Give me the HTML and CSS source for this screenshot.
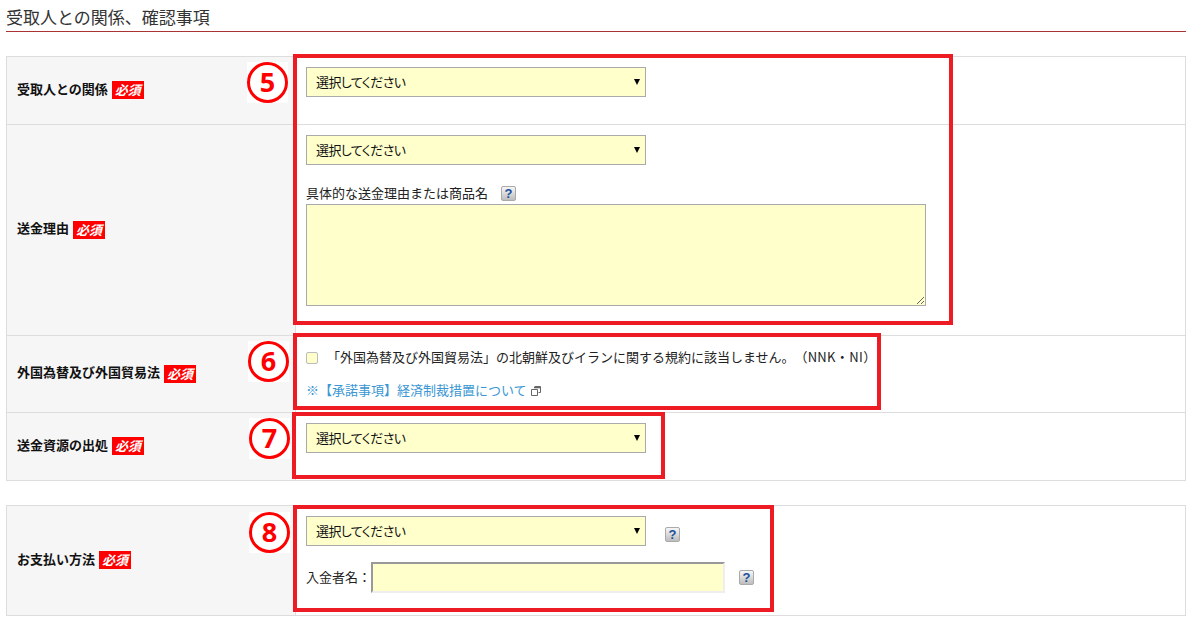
FILE: index.html
```html
<!DOCTYPE html>
<html lang="ja">
<head>
<meta charset="utf-8">
<title>受取人との関係、確認事項</title>
<link rel="stylesheet" href="styles.css">
</head>
<body>
<h2 class="heading">受取人との関係、確認事項</h2>
<table class="form first">
  <tr class="r1">
    <th><span class="lab">受取人との関係</span><span class="req">必須</span></th>
    <td><div class="sel"><select><option>選択してください</option></select></div></td>
  </tr>
  <tr class="r2">
    <th><span class="lab">送金理由</span><span class="req">必須</span></th>
    <td>
      <div class="sel"><select><option>選択してください</option></select></div>
      <div class="reason">具体的な送金理由または商品名<span class="help h-reason">?</span></div>
      <textarea class="area"></textarea>
    </td>
  </tr>
  <tr class="r3">
    <th><span class="lab">外国為替及び外国貿易法</span><span class="req">必須</span></th>
    <td>
      <label class="agree"><input type="checkbox" class="check"><span class="agree-text">「外国為替及び外国貿易法」の北朝鮮及びイランに関する規約に該当しません。（<span class="code">NNK・NI</span>）</span></label>
      <a class="link" href="#">※【承諾事項】経済制裁措置について<svg class="ext" width="10" height="10" viewBox="0 0 10 10"><path d="M3.500 .5h6v6h-2M.5 3.500h6v6h-6z" fill="none" stroke="#666" stroke-width="1"/><path d="M3 1h6.500v1.300H3z" fill="#666"/></svg></a>
    </td>
  </tr>
  <tr class="r4">
    <th><span class="lab">送金資源の出処</span><span class="req">必須</span></th>
    <td><div class="sel"><select><option>選択してください</option></select></div></td>
  </tr>
</table>
<table class="form second">
  <tr class="r5">
    <th><span class="lab">お支払い方法</span><span class="req">必須</span></th>
    <td>
      <div class="pay-row"><div class="sel"><select><option>選択してください</option></select></div><span class="help h-pay">?</span></div>
      <div class="name-row"><span>入金者名：</span><input class="name" type="text"><span class="help h-name">?</span></div>
    </td>
  </tr>
</table>

<div class="mark box5"></div>
<div class="mark box6"></div>
<div class="mark box7"></div>
<div class="mark box8"></div>
<div class="num n5"><span>5</span></div>
<div class="num n6"><span>6</span></div>
<div class="num n7"><span>7</span></div>
<div class="num n8"><span>8</span></div>
</body>
</html>
```
FILE: styles.css
```css
* { box-sizing: border-box; }
html, body { margin: 0; background: #fff; }
body {
  position: relative;
  width: 1192px;
  height: 624px;
  overflow: hidden;
  padding: 0 6px;
  font: 13px/1.4 "Noto Sans CJK JP", "Noto Sans", sans-serif;
  color: #222;
  text-spacing-trim: space-all;
}
.heading {
  margin: 0 0 24px;
  height: 32px;
  padding-top: 5px;
  font-size: 17px;
  font-weight: 400;
  line-height: 24px;
  color: #333;
  border-bottom: 1px solid #a33;
}
.form {
  width: 1180px;
  border-collapse: collapse;
  table-layout: fixed;
}
.second { margin-top: 24px; }
.form th, .form td { border: 1px solid #ddd; }
.form th {
  width: 289px;
  padding: 0 10px 2px;
  background: #f6f6f6;
  text-align: left;
  vertical-align: middle;
  font-weight: 700;
  color: #111;
}
.form td { padding: 10px; vertical-align: top; }
.r1 { height: 68px; }
.r2 { height: 211px; }
.r3 { height: 77px; }
.r4 { height: 68px; }
.r5 { height: 110px; }
.req {
  display: inline-block;
  width: 32px;
  height: 18px;
  margin-left: 4px;
  background: #f00;
  color: #fff;
  font: italic 700 13px/18px "Noto Sans CJK JP", sans-serif;
  text-align: center;
  vertical-align: middle;
}
.sel { position: relative; width: 340px; height: 30px; }
.sel::after {
  content: "";
  position: absolute;
  right: 6px;
  top: 12px;
  border: 3.500px solid transparent;
  border-top: 6px solid #000;
  border-bottom: 0;
}
.sel select {
  appearance: none;
  display: block;
  width: 100%;
  height: 30px;
  padding: 0 9px 2px;
  border: 1px solid #aaa;
  border-radius: 0;
  background: #ffc;
  color: #111;
  font: 13px "Noto Sans CJK JP", sans-serif;
  font-feature-settings: "palt";
  letter-spacing: -0.6px;
}
.reason { display: flex; align-items: center; height: 20px; margin-top: 18px; margin-bottom: 1px; color: #222; }
.help {
  display: inline-block;
  flex: none;
  width: 15px;
  height: 15px;
  border: 1px solid #aaa;
  border-radius: 2px;
  background: linear-gradient(#f6f6f6, #bdbdbd);
  color: #1c4f9c;
  font: 700 13px/13px "Liberation Sans", sans-serif;
  text-align: center;
}
.h-reason { margin-left: 13px; }
.area {
  display: block;
  width: 620px;
  height: 102px;
  margin: 0;
  padding: 4px;
  border: 1px solid #aaa;
  background: #ffc;
}
.agree { display: flex; align-items: center; height: 22px; }
.code { letter-spacing: 0.35px; }
.check {
  appearance: none;
  flex: none;
  width: 12px;
  height: 12px;
  margin: 2px 9px 0 0;
  border: 1px solid #bbb;
  border-radius: 2px;
  background: #ffc;
}
.link {
  display: block;
  margin-top: 11px;
  color: #3b97d3;
  text-decoration: none;
  line-height: 22px;
}
.ext { margin-left: 4px; vertical-align: -1px; }
.pay-row { display: flex; align-items: center; }
.h-pay { margin-left: 19px; margin-top: 6px; }
.name-row { display: flex; align-items: center; margin-top: 16px; }
.name {
  width: 354px;
  height: 31px;
  margin: 0 14px 0 0;
  border: 2px solid;
  border-color: #999 #eee #eee #999;
  background: #ffc;
}

/* Red call-outs drawn over the form */
.mark { position: absolute; border: 4px solid #ed1c24; }
.box5 { left: 293px; top: 54px; width: 660px; height: 271px; }
.box6 { left: 293px; top: 333px; width: 588px; height: 77px; }
.box7 { left: 292px; top: 412px; width: 373px; height: 67px; }
.box8 { left: 293px; top: 505px; width: 481px; height: 107px; }
.num {
  position: absolute;
  width: 41px;
  height: 41px;
  background: #fff;
  display: flex;
  align-items: center;
  justify-content: center;
}
.num span {
  width: 41px;
  height: 41px;
  border: 3px solid #f00;
  border-radius: 50%;
  color: #f00;
  font: 700 27px/33px "Open Sans", sans-serif;
  text-align: center;
}
.n5 { left: 247px; top: 62px; }
.n6 { left: 248px; top: 341px; }
.n7 { left: 249px; top: 418px; }
.n8 { left: 249px; top: 512px; }
```
